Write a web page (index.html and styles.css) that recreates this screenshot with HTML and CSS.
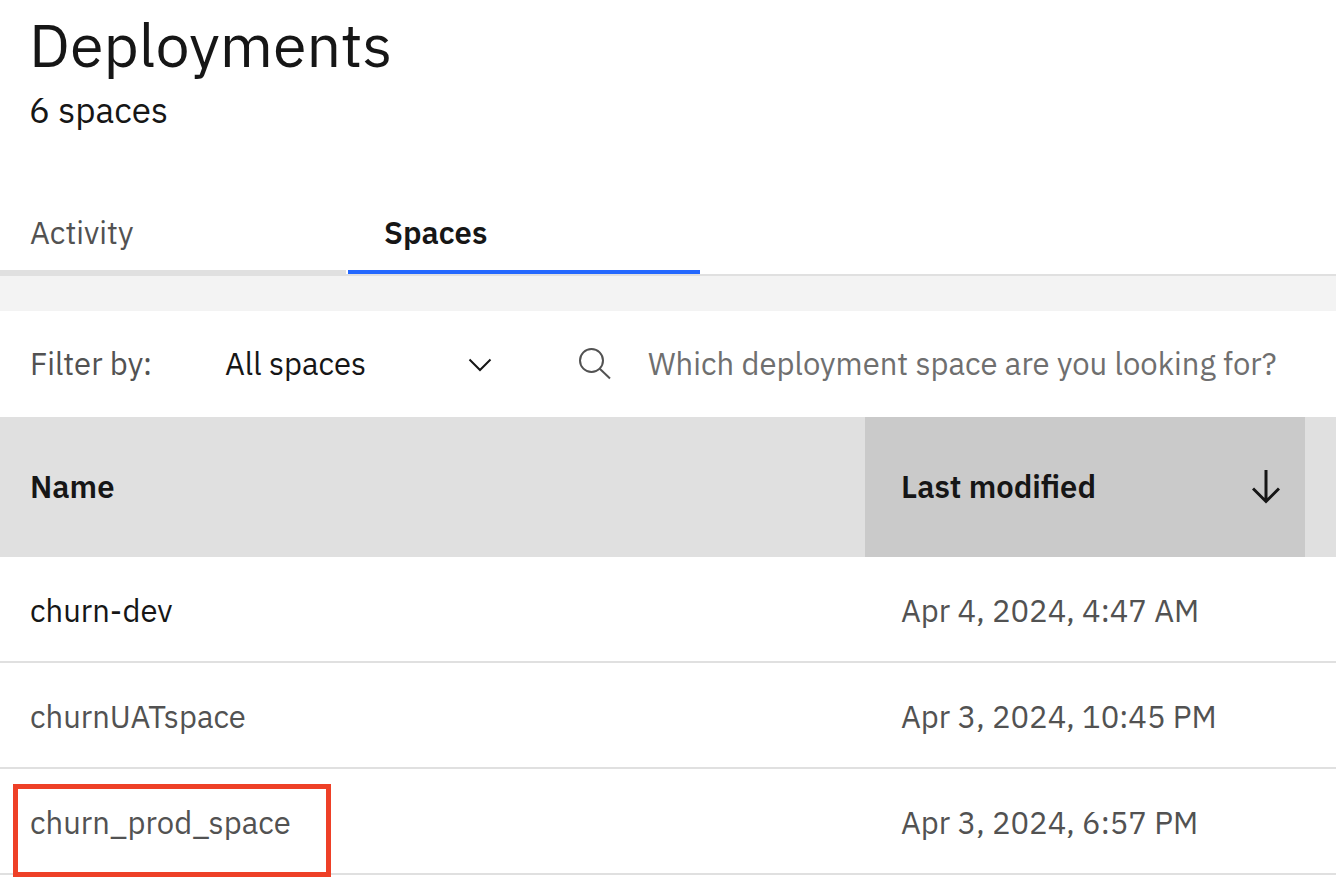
FILE: index.html
```html
<!DOCTYPE html>
<html lang="en">
<head>
<meta charset="utf-8">
<meta name="viewport" content="width=device-width, initial-scale=1">
<title>Deployments</title>
<link rel="stylesheet" href="styles.css">
</head>
<body>
<header class="page-header">
  <h1 class="page-title">Deployments</h1>
  <p class="page-subtitle">6 spaces</p>
</header>
<nav class="tabs" role="tablist" aria-label="Deployment views">
  <button class="tab" type="button" role="tab" aria-selected="false">Activity</button>
  <button class="tab tab-selected" type="button" role="tab" aria-selected="true">Spaces</button>
</nav>
<main class="content">
  <div class="toolbar">
    <label class="filter-label" for="space-filter">Filter by:</label>
    <div class="filter">
      <select class="filter-select" id="space-filter"><option>All spaces</option></select>
      <svg class="chevron" viewBox="0 0 24 14" aria-hidden="true"><path d="M1.5 1.500 12 12 22.500 1.500"/></svg>
    </div>
    <label class="search-label" for="space-search" aria-label="Search spaces">
      <svg class="search-icon" viewBox="0 0 32 32" aria-hidden="true"><circle cx="12.500" cy="12.500" r="11.500"/><path d="m20.500 20.500 10.500 10"/></svg>
    </label>
    <input class="search-input" id="space-search" type="text" placeholder="Which deployment space are you looking for?">
  </div>
  <table class="spaces">
    <colgroup><col><col class="col-modified"><col class="col-end"></colgroup>
    <thead>
      <tr>
        <th scope="col">Name</th>
        <th scope="col" class="sorted" aria-sort="descending">
          <button class="sort" type="button">Last modified
            <svg class="sort-icon" viewBox="0 0 28 34" aria-hidden="true"><path d="M14 0v31M1 18.500l13 13 13-13"/></svg>
          </button>
        </th>
        <td></td>
      </tr>
    </thead>
    <tbody>
      <tr><td><a class="space-link space-link-active" href="#churn-dev">churn-dev</a></td><td>Apr 4, 2024, 4:47 AM</td><td></td></tr>
      <tr><td><a class="space-link" href="#churnUATspace">churnUATspace</a></td><td>Apr 3, 2024, 10:45 PM</td><td></td></tr>
      <tr><td class="marked"><a class="space-link" href="#churn_prod_space">churn_prod_space</a></td><td>Apr 3, 2024, 6:57 PM</td><td></td></tr>
    </tbody>
  </table>
</main>
</body>
</html>
```
FILE: styles.css
```css
*,
*::before,
*::after {
  box-sizing: border-box;
}

body {
  min-height: 100vh;
  margin: 0;
  background: #fff;
  color: #161616;
  font-family: "IBM Plex Sans", "Noto Sans", sans-serif;
  font-size: 31px;
  line-height: 40px;
}

button,
select,
input {
  margin: 0;
  padding: 0;
  border: 0;
  border-radius: 0;
  background: none;
  color: inherit;
  font: inherit;
}

.page-header {
  padding: 6px 29px 67px;
}

.page-title {
  margin: 0;
  font-size: 61px;
  font-weight: 400;
  line-height: 76px;
}

.page-subtitle {
  margin: 8px 0 0;
  font-size: 35px;
}

.tabs {
  display: flex;
  gap: 2px;
  border-bottom: 2px solid #e0e0e0;
}

.tab {
  width: 346px;
  padding: 16px 30px 17px;
  border-bottom: 4px solid #e0e0e0;
  color: #525252;
  text-align: left;
}

.tab-selected {
  width: 352px;
  padding-left: 36px;
  border-color: #2468fe;
  color: #161616;
  font-weight: 600;
}

.content {
  border-top: 35px solid #f3f3f3;
}

.toolbar {
  display: flex;
  align-items: center;
  height: 106px;
  padding-left: 30px;
}

.filter-label {
  width: 195px;
  color: #525252;
}

.filter {
  position: relative;
  width: 354px;
}

.filter-select {
  width: 270px;
  appearance: none;
}

.chevron {
  position: absolute;
  top: 14px;
  left: 243px;
  width: 24px;
  height: 14px;
  pointer-events: none;
}

.chevron,
.search-icon,
.sort-icon {
  fill: none;
  stroke: #161616;
  stroke-width: 2;
}

.search-label {
  display: flex;
  width: 69px;
}

.search-icon {
  width: 32px;
  height: 32px;
  stroke: #525252;
}

.search-input {
  flex: 1;
  min-width: 0;
}

.search-input::placeholder {
  color: #6f6f6f;
  opacity: 1;
}

.spaces {
  width: 100%;
  border-collapse: separate;
  border-spacing: 0;
  table-layout: fixed;
}

.col-modified {
  width: 440px;
}

.col-end {
  width: 31px;
}

.spaces th,
.spaces td {
  padding: 0 0 0 30px;
  text-align: left;
}

.spaces th + th,
.spaces td + td {
  padding-left: 36px;
}

.spaces thead tr {
  height: 140px;
  background: #e0e0e0;
}

.spaces th {
  font-weight: 600;
}

.spaces .sorted {
  background: #cacaca;
}

.sort {
  display: flex;
  align-items: center;
  justify-content: space-between;
  width: 100%;
  padding-right: 25px;
}

.sort-icon {
  width: 28px;
  height: 34px;
  stroke-width: 3;
}

.spaces tbody td {
  height: 106px;
  padding-top: 4px;
  border-bottom: 2px solid #e0e0e0;
  color: #525252;
}

.space-link {
  color: #525252;
  text-decoration: none;
}

.space-link-active {
  color: #161616;
}

.marked {
  position: relative;
}

.marked::after {
  content: "";
  position: absolute;
  top: 15px;
  left: 13px;
  width: 318px;
  height: 93px;
  border: 5px solid #ee4027;
  pointer-events: none;
}
```
